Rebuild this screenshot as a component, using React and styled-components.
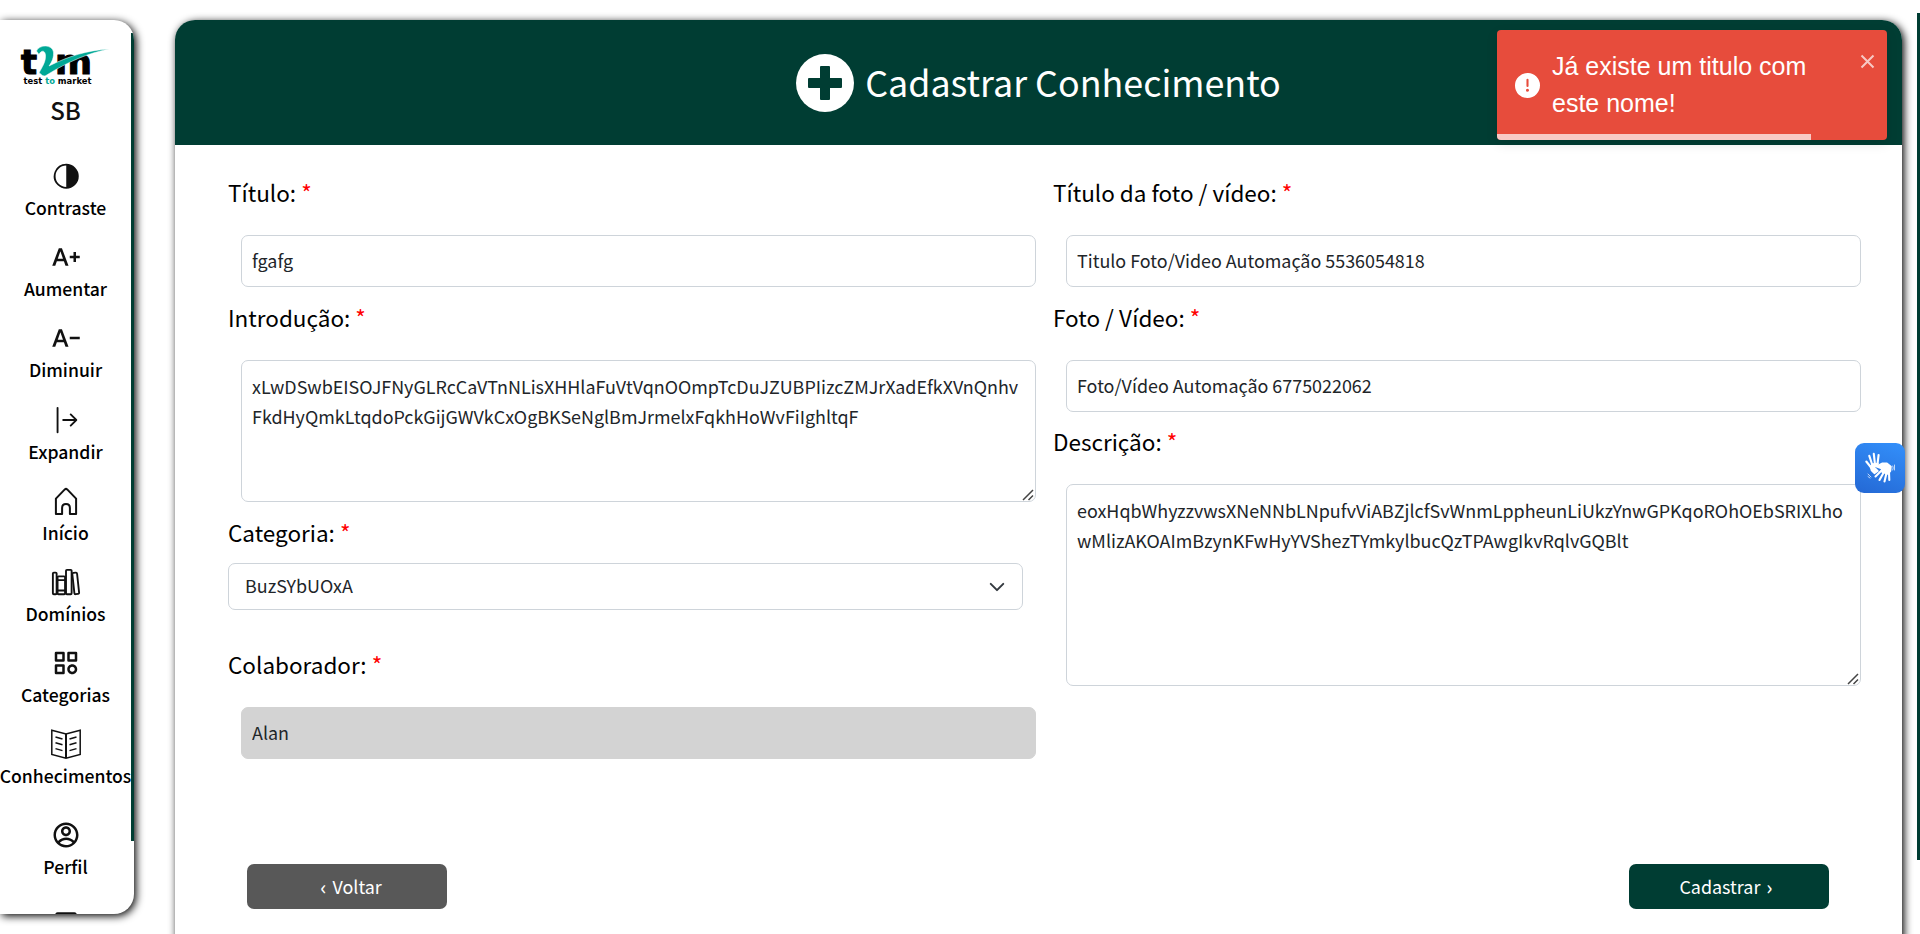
import React from "react";
import styled, { createGlobalStyle } from "styled-components";
import { MdTextIncrease, MdTextDecrease } from "react-icons/md";
import { BsArrowBarRight } from "react-icons/bs";
import { BiCategory } from "react-icons/bi";
import { IoLibraryOutline, IoContrast } from "react-icons/io5";
import { RiAccountCircleLine } from "react-icons/ri";

const green = "#003d33";

const GlobalStyle = createGlobalStyle`
  *, *::before, *::after { box-sizing: border-box; }
  body {
    margin: 0;
    height: 934px;
    overflow: hidden;
    background: #fff;
    color: #000;
    font-family: "Noto Sans CJK JP", "Noto Sans", sans-serif;
  }
`;

const Page = styled.div`
  display: flex;
  align-items: flex-start;
  height: 934px;
  padding-top: 20px;
  overflow: hidden;
`;

const Sidebar = styled.nav`
  display: flex;
  flex: none;
  width: 134px;
  height: 894px;
  background: #fff;
  border-radius: 0 20px 20px 0;
  box-shadow: 2px 2px 8px #000;
  overflow: hidden;
`;

const Menu = styled.div`
  display: flex;
  flex-direction: column;
  align-items: center;
  width: 131px;
  flex: none;
  padding-top: 25px;
`;

const LogoSvg = styled.svg`
  display: block;
  flex: none;
  width: 90px;
  height: 40px;
  overflow: visible;
`;

const Thumb = styled.div`
  flex: none;
  width: 3px;
  background: ${green};
  height: ${(p) => p.$length}px;
  margin-top: ${(p) => p.$top}px;
`;

const Initials = styled.div`
  flex: none;
  margin-top: 2px;
  height: 74px;
  line-height: 46px;
  font-size: 24px;
  font-weight: 500;
  color: #111;
`;

const MenuItem = styled.a`
  display: flex;
  flex-direction: column;
  align-items: center;
  flex: none;
  height: 81.2px;
  margin-top: ${(p) => p.$gap || 0}px;
  color: #111;
  svg { display: block; flex: none; }
`;

const MenuLabel = styled.span`
  height: 36px;
  margin-top: -1px;
  line-height: 36px;
  font-size: 17.6px;
  font-weight: 500;
  color: #000;
  white-space: nowrap;
`;

const IconBox = styled.span`
  display: flex;
  align-items: center;
  justify-content: center;
  width: 30px;
  height: 30px;
  margin-left: 1px;
`;

const Card = styled.main`
  flex: none;
  width: 1727px;
  height: 960px;
  margin-left: 41px;
  background: #fff;
  border-radius: 20px;
  box-shadow: 2px 2px 8px #000;
`;

const CardHeader = styled.header`
  display: flex;
  align-items: center;
  justify-content: center;
  gap: 11px;
  height: 125px;
  background: ${green};
  border-radius: 20px 20px 0 0;
`;

const Title = styled.h1`
  margin: 0;
  padding-bottom: 3px;
  font-size: 35.84px;
  font-weight: 400;
  line-height: 58px;
  color: #fff;
  white-space: nowrap;
`;

const Form = styled.form`
  padding: 29px 41px 0 53px;
`;

const Columns = styled.div`
  display: flex;
  gap: 17px;
  height: 690px;
`;

const Column = styled.div`
  width: 808px;
`;

const Field = styled.div`
  display: flex;
  flex-direction: column;
  margin-bottom: ${(p) => p.$after ?? 12}px;
`;

const Label = styled.label`
  height: 36px;
  margin-bottom: ${(p) => (p.$tight ? 13 : 25)}px;
  line-height: 36px;
  font-size: 22.5px;
  font-weight: 400;
`;

const Required = styled.span`
  color: #f00;
`;

const Input = styled.input`
  width: 795px;
  height: 52px;
  margin: 0 0 0 13px;
  padding: 0 10px 2px;
  border: 1px solid ${(p) => (p.disabled ? "#d3d3d3" : "#ced4da")};
  border-radius: 7px;
  background: ${(p) => (p.disabled ? "#d3d3d3" : "#fff")};
  color: #212529;
  font: 400 17.92px/30px "Noto Sans CJK JP", "Noto Sans", sans-serif;
`;

const AreaWrap = styled.div`
  position: relative;
  width: 795px;
  margin-left: 13px;
`;

const TextArea = styled.textarea`
  display: block;
  width: 795px;
  height: ${(p) => p.$height}px;
  margin: 0;
  padding: 10px;
  border: 1px solid #ced4da;
  border-radius: 7px;
  background: #fff;
  color: #212529;
  font: 400 17.92px/30px "Noto Sans CJK JP", "Noto Sans", sans-serif;
  word-break: break-all;
  resize: none;
`;

const Grip = styled.svg`
  position: absolute;
  right: 2px;
  bottom: 1px;
  width: 12px;
  height: 12px;
`;

const Select = styled.div`
  display: flex;
  align-items: center;
  justify-content: space-between;
  width: 795px;
  height: 47px;
  padding: 0 15px 0 16px;
  border: 1px solid #ced4da;
  border-radius: 7px;
  color: #212529;
  font-size: 17.92px;
  font-weight: 400;
`;

const SelectValue = styled.span`
  padding-bottom: 4px;
`;

const Actions = styled.div`
  display: flex;
  justify-content: space-between;
  padding: 0 32px 0 19px;
`;

const Button = styled.button`
  display: flex;
  justify-content: center;
  gap: 6px;
  width: 200px;
  height: 45px;
  padding: ${(p) => (p.$primary ? "0 6px 0 0" : "0 0 0 8px")};
  border: 0;
  border-radius: 7px;
  background: ${(p) => (p.$primary ? green : "#585858")};
  color: #fff;
  font: 400 17.92px/45px "Noto Sans CJK JP", "Noto Sans", sans-serif;
`;

const Chevron = styled.span`
  font-size: 20px;
  font-weight: 500;
`;

const PageScroll = styled.div`
  position: absolute;
  top: 13px;
  right: 0;
  width: 3px;
  height: 847px;
  background: ${green};
`;

const Toast = styled.div`
  position: absolute;
  top: 30px;
  left: 1497px;
  display: flex;
  width: 390px;
  height: 110px;
  padding: 0 10px 0 18px;
  background: #e74c3c;
  border-radius: 4px;
  box-shadow: 0 4px 12px rgba(0, 0, 0, 0.1);
  overflow: hidden;
`;

const ToastIcon = styled.svg`
  flex: none;
  width: 25px;
  height: 25px;
  margin: 43px 12px 0 0;
`;

const ToastText = styled.div`
  flex: none;
  width: 280px;
  margin-top: 18px;
  color: #fff;
  font-family: "Liberation Sans", Arial, sans-serif;
  font-size: 25px;
  line-height: 37px;
`;

const CloseIcon = styled.svg`
  flex: none;
  width: 15px;
  height: 15px;
  margin: 24px 0 0 28px;
`;

const Progress = styled.div`
  position: absolute;
  left: 0;
  bottom: 0;
  width: 314px;
  height: 6px;
  background: rgba(255, 255, 255, 0.7);
`;

const SignButton = styled.div`
  position: absolute;
  top: 443px;
  left: 1855px;
  display: flex;
  align-items: center;
  justify-content: center;
  width: 50px;
  height: 50px;
  border-radius: 9px;
  background: linear-gradient(20deg, #2468d4, #3390fb);
`;

function Logo() {
  return (
    <LogoSvg viewBox="0 0 90 40">
      <g fontFamily="DejaVu Sans" fontWeight="700" fill="#000">
        <text x="0" y="29" fontSize="33" textLength="16" lengthAdjust="spacingAndGlyphs" stroke="#000" strokeWidth="1.2">t</text>
        <text x="34" y="29" fontSize="33" textLength="37" lengthAdjust="spacingAndGlyphs" stroke="#000" strokeWidth="1">m</text>
        <text x="2.500" y="38.600" fontSize="8" textLength="68" lengthAdjust="spacingAndGlyphs">
          test <tspan fill="#00a896">to</tspan> market
        </text>
      </g>
      <path
        d="M15.500 6C18-.5 31-1 32.500 7C33 12 31 17 28 21C48 11 66 5.500 88 4C68 8 48 16 24 31C20 31 20 28 18 28C21 22 25 17 24.500 10C24 5 20 5 18 9.500Z"
        fill="#00a896"
        stroke="#fff"
        strokeWidth=".5"
      />
    </LogoSvg>
  );
}

function HomeIcon() {
  return (
    <svg width="30" height="30" viewBox="0 0 30 30" fill="none" stroke="currentColor" strokeWidth="2" strokeLinejoin="round">
      <path d="M4.900 12.600 13.800 3.400Q15 2.300 16.200 3.400L25.100 12.600V27.900H18.900V22Q18.900 18 15 18T11.100 22V27.900H4.900Z" />
    </svg>
  );
}

function BookIcon() {
  return (
    <svg width="30" height="30" viewBox="0 0 30 30" fill="none" stroke="currentColor" strokeWidth="1.500">
      <path d="M.8 1.200 15 5 29.200 1.200V25.500L15 29.200.8 25.500Z" />
      <path d="M15 5V29" strokeWidth="2" />
      <path d="M4.500 8 11.500 10M4.500 13.800 11.500 15.800M4.500 19.600 11.500 21.600M25.500 8 18.500 10M25.500 13.800 18.500 15.800M25.500 19.600 18.500 21.600" />
    </svg>
  );
}

function PlusIcon() {
  return (
    <svg width="58" height="58" viewBox="0 0 58 58">
      <circle cx="29" cy="29" r="29" fill="#fff" />
      <path
        d="M25 12h8q1 0 1 1v11h11q1 0 1 1v8q0 1-1 1H34v11q0 1-1 1h-8q-1 0-1-1V34H13q-1 0-1-1v-8q0-1 1-1H24V13q0-1 1-1z"
        fill={green}
      />
    </svg>
  );
}

function HandsIcon() {
  return (
    <svg width="32" height="32" viewBox="0 0 32 32" fill="none" stroke="#fff" strokeLinecap="round">
      <path d="M6.500 14.500 8.500 12 14 11.500 13 13.500 10.500 15.500 14 19 10.500 21.500 7.500 18.500Z" fill="#fff" strokeWidth="1.500" strokeLinejoin="round" />
      <path d="M7.500 16 2.300 9.500M8.500 13.500 5.300 3.800M11 12.500 9.800 1.800M13.500 12 14.600 3" strokeWidth="2.100" />
      <path d="M12 14.500 18 11.300 23 11.300 27 14.500 26.500 19 24 22 18 20 17.500 16.500Z" fill="#fff" strokeWidth="1.500" strokeLinejoin="round" />
      <path d="M18 18 11.500 24.500M20 20 15.500 28M22.500 21 20.500 29.500M25 20 25.300 28" strokeWidth="2.100" />
      <path d="M28.800 14Q29.800 16 28.800 18M30.500 13V18M4 22 7 25M4 24.500 6 26" strokeWidth=".7" />
    </svg>
  );
}

const items = [
  { label: "Contraste", icon: <IoContrast size={28.5} /> },
  { label: "Aumentar", icon: <MdTextIncrease size={30} /> },
  { label: "Diminuir", icon: <MdTextDecrease size={30} /> },
  { label: "Expandir", icon: <BsArrowBarRight size={30} /> },
  { label: "Início", icon: <HomeIcon /> },
  { label: "Domínios", icon: <IoLibraryOutline size={30} /> },
  { label: "Categorias", icon: <BiCategory size={30} /> },
  { label: "Conhecimentos", icon: <BookIcon /> },
  { label: "Perfil", icon: <RiAccountCircleLine size={30} />, gap: 9 },
];

function FieldLabel({ text, tight }) {
  return (
    <Label $tight={tight}>
      {text} <Required>*</Required>
    </Label>
  );
}

function Area({ height, value }) {
  return (
    <AreaWrap>
      <TextArea $height={height} spellCheck={false} defaultValue={value} />
      <Grip viewBox="0 0 12 12" stroke="#444" strokeWidth="1.500">
        <path d="M1 11 11 1M6.500 11 11 6.500" />
      </Grip>
    </AreaWrap>
  );
}

export default function App() {
  return (
    <>
      <GlobalStyle />
      <Page>
        <Sidebar>
          <Menu>
            <Logo />
            <Initials>SB</Initials>
            {items.map((item) => (
              <MenuItem key={item.label} $gap={item.gap}>
                <IconBox>{item.icon}</IconBox>
                <MenuLabel>{item.label}</MenuLabel>
              </MenuItem>
            ))}
            <MenuItem $gap={5}>
              <svg width="30" height="30" viewBox="0 0 30 30" fill="none" stroke="currentColor" strokeWidth="2.500">
                <rect x="5.500" y="7.500" width="19" height="19" rx="1" />
              </svg>
            </MenuItem>
          </Menu>
          <Thumb $top={13} $length={808} />
        </Sidebar>
        <Card>
          <CardHeader>
            <PlusIcon />
            <Title>Cadastrar Conhecimento</Title>
          </CardHeader>
          <Form>
            <Columns>
              <Column>
                <Field>
                  <FieldLabel text="Título:" />
                  <Input defaultValue="fgafg" />
                </Field>
                <Field>
                  <FieldLabel text="Introdução:" />
                  <Area
                    height={142}
                    value="xLwDSwbEISOJFNyGLRcCaVTnNLisXHHlaFuVtVqnOOmpTcDuJZUBPIizcZMJrXadEfkXVnQnhvFkdHyQmkLtqdoPckGijGWVkCxOgBKSeNglBmJrmelxFqkhHoWvFiIghltqF"
                  />
                </Field>
                <Field $after={36}>
                  <FieldLabel text="Categoria:" tight />
                  <Select>
                    <SelectValue>BuzSYbUOxA</SelectValue>
                    <svg width="20" height="20" viewBox="0 0 16 16" fill="none" stroke="#343a40" strokeWidth="1.600" strokeLinecap="round" strokeLinejoin="round">
                      <path d="m3 5.500 5 5 5-5" />
                    </svg>
                  </Select>
                </Field>
                <Field>
                  <FieldLabel text="Colaborador:" />
                  <Input defaultValue="Alan" disabled />
                </Field>
              </Column>
              <Column>
                <Field>
                  <FieldLabel text="Título da foto / vídeo:" />
                  <Input defaultValue="Titulo Foto/Video Automação 5536054818" />
                </Field>
                <Field $after={11}>
                  <FieldLabel text="Foto / Vídeo:" />
                  <Input defaultValue="Foto/Vídeo Automação 6775022062" />
                </Field>
                <Field>
                  <FieldLabel text="Descrição:" />
                  <Area
                    height={202}
                    value="eoxHqbWhyzzvwsXNeNNbLNpufvViABZjlcfSvWnmLppheunLiUkzYnwGPKqoROhOEbSRIXLhowMlizAKOAImBzynKFwHyYVShezTYmkylbucQzTPAwgIkvRqlvGQBlt"
                  />
                </Field>
              </Column>
            </Columns>
            <Actions>
              <Button type="button">
                <Chevron>‹</Chevron>
                <span>Voltar</span>
              </Button>
              <Button type="button" $primary>
                <span>Cadastrar</span>
                <Chevron>›</Chevron>
              </Button>
            </Actions>
          </Form>
        </Card>
      </Page>
      <PageScroll />
      <SignButton>
        <HandsIcon />
      </SignButton>
      <Toast>
        <ToastIcon viewBox="0 0 24 24" fill="#fff">
          <path d="M11.983 0a12.206 12.206 0 00-8.510 3.653A11.800 11.800 0 000 12.207 11.779 11.779 0 0011.800 24h.214A12.111 12.111 0 0024 11.791 11.766 11.766 0 0011.983 0zM10.500 16.542a1.476 1.476 0 011.449-1.530h.027a1.527 1.527 0 011.523 1.470 1.475 1.475 0 01-1.449 1.530h-.027a1.529 1.529 0 01-1.523-1.470zM11 12.500v-6a1 1 0 012 0v6a1 1 0 11-2 0z" />
        </ToastIcon>
        <ToastText>Já existe um titulo com este nome!</ToastText>
        <CloseIcon viewBox="0 0 15 15" stroke="#fff" strokeWidth="2" opacity=".7">
          <path d="M1.500 1.500 13.500 13.500M13.500 1.500 1.500 13.500" />
        </CloseIcon>
        <Progress />
      </Toast>
    </>
  );
}
